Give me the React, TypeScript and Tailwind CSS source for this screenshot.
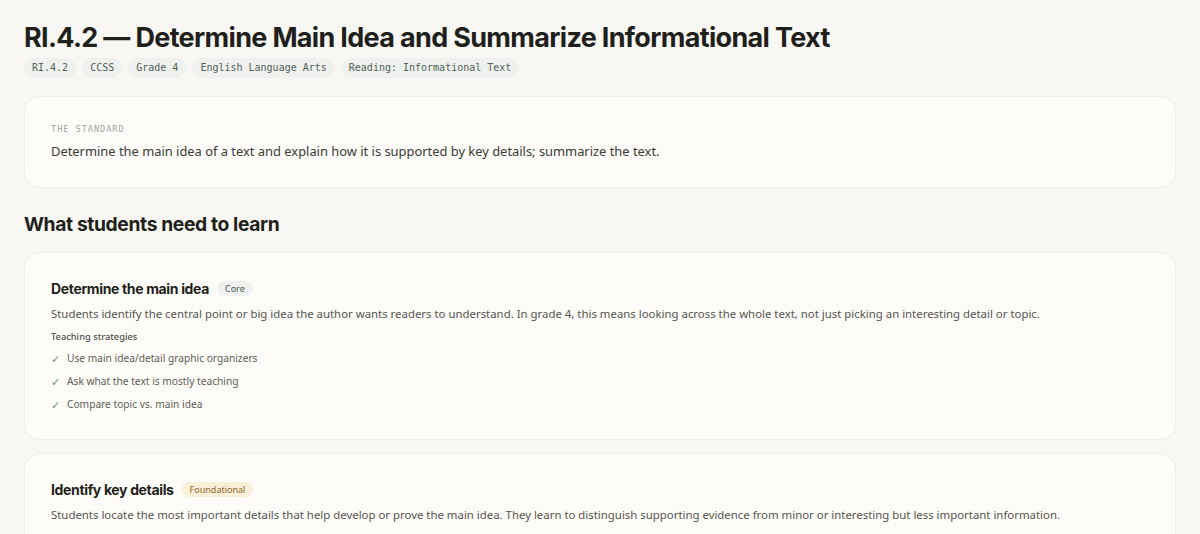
const heading = '"Inter", "Liberation Sans", sans-serif';
const body = '"Noto Sans", "Liberation Sans", sans-serif';
const mono = '"DejaVu Sans Mono", "Liberation Mono", monospace';

const tags = ["RI.4.2", "CCSS", "Grade 4", "English Language Arts", "Reading: Informational Text"];

type Skill = {
  title: string;
  level: "Core" | "Foundational";
  text: string;
  strategies?: string[];
};

const skills: Skill[] = [
  {
    title: "Determine the main idea",
    level: "Core",
    text: "Students identify the central point or big idea the author wants readers to understand. In grade 4, this means looking across the whole text, not just picking an interesting detail or topic.",
    strategies: [
      "Use main idea/detail graphic organizers",
      "Ask what the text is mostly teaching",
      "Compare topic vs. main idea",
    ],
  },
  {
    title: "Identify key details",
    level: "Foundational",
    text: "Students locate the most important details that help develop or prove the main idea. They learn to distinguish supporting evidence from minor or interesting but less important information.",
  },
];

function LevelBadge({ level }: { level: Skill["level"] }) {
  const cls =
    level === "Core"
      ? "bg-[#eef1ee] text-[#4d5a55]"
      : "bg-[#fbefd9] text-[#8a6a2c]";
  return (
    <span className={`rounded-full px-2 py-[3px] text-[9px] leading-none ${cls}`} style={{ fontFamily: body }}>
      {level}
    </span>
  );
}

function SkillCard({ skill }: { skill: Skill }) {
  return (
    <div className="rounded-2xl border border-[#efede6] bg-[#fdfcf8] px-[26px] pt-[25px] pb-[26px]">
      <div className="flex items-center gap-2">
        <h3 className="text-[14px] font-bold tracking-tight text-[#1f1f1c]" style={{ fontFamily: heading }}>
          {skill.title}
        </h3>
        <LevelBadge level={skill.level} />
      </div>
      <p className="mt-[6px] text-[11.4px] leading-[18px] text-[#55554f]" style={{ fontFamily: body }}>
        {skill.text}
      </p>
      {skill.strategies && (
        <div className="mt-[7px]">
          <div className="text-[9.3px] font-medium text-[#4f4f4a]" style={{ fontFamily: body }}>
            Teaching strategies
          </div>
          <ul className="mt-[6px] flex flex-col gap-[6px]">
            {skill.strategies.map((s) => (
              <li key={s} className="flex items-center gap-[7px] text-[10.2px] leading-[17px] text-[#5d5d57]" style={{ fontFamily: body }}>
                <span className="text-[11px] text-[#5b9a85]">✓</span>
                {s}
              </li>
            ))}
          </ul>
        </div>
      )}
    </div>
  );
}

export default function App() {
  return (
    <div className="h-screen overflow-y-auto bg-[#f8f7f3] [scrollbar-width:thin] [scrollbar-color:#c4c2bd_transparent]">
      <main className="px-6 pt-[21px] pb-12">
        <h1 className="text-[27px] font-bold leading-[34px] tracking-[-0.025em] text-[#1f1f1c]" style={{ fontFamily: heading }}>
          RI.4.2 — Determine Main Idea and Summarize Informational Text
        </h1>
        <div className="mt-[3px] flex flex-wrap gap-[6px]">
          {tags.map((t) => (
            <span
              key={t}
              className="rounded-full bg-[#eef1ed] px-2 py-[4px] text-[10px] leading-[12px] text-[#55605a]"
              style={{ fontFamily: mono }}
            >
              {t}
            </span>
          ))}
        </div>

        <section className="mt-[18px] rounded-2xl border border-[#efede6] bg-[#fdfcf8] px-[26px] pt-[26px] pb-[26px]">
          <div className="text-[8.5px] uppercase tracking-[0.12em] text-[#a3a39c]" style={{ fontFamily: mono }}>
            The Standard
          </div>
          <p className="mt-[5px] text-[12.9px] leading-[20px] text-[#3b3b37]" style={{ fontFamily: body }}>
            Determine the main idea of a text and explain how it is supported by key details; summarize the text.
          </p>
        </section>

        <h2 className="mt-[22px] text-[19.3px] font-bold tracking-[-0.02em] text-[#1f1f1c]" style={{ fontFamily: heading }}>
          What students need to learn
        </h2>

        <div className="mt-[13px] flex flex-col gap-[13px]">
          {skills.map((s) => (
            <SkillCard key={s.title} skill={s} />
          ))}
        </div>
      </main>
    </div>
  );
}
